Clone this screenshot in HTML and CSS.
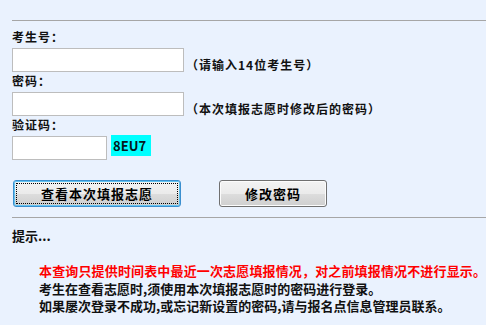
FILE: index.html
```html
<!DOCTYPE html>
<html lang="zh-CN">
<head>
<meta charset="utf-8">
<link rel="stylesheet" href="styles.css">
</head>
<body>
<div class="page">
  <div class="rule"></div>
  <form class="login">
    <div class="group">
      <div class="label">考生号：</div>
      <div class="field">
        <span class="input wide"></span>
        <span class="hint">（请输入14位考生号）</span>
      </div>
    </div>
    <div class="group">
      <div class="label">密码：</div>
      <div class="field">
        <span class="input wide"></span>
        <span class="hint">（本次填报志愿时修改后的密码）</span>
      </div>
    </div>
    <div class="group">
      <div class="label">验证码：</div>
      <div class="field top">
        <span class="input narrow"></span>
        <span class="captcha">8EU7</span>
      </div>
    </div>
    <div class="buttons">
      <div class="btn primary"><span class="focus">查看本次填报志愿</span></div>
      <div class="btn second"><span>修改密码</span></div>
    </div>
  </form>
  <div class="rule rule2"></div>
  <div class="tips-title">提示...</div>
  <div class="tips">
    <p class="red">本查询只提供时间表中最近一次志愿填报情况，对之前填报情况不进行显示。</p>
    <p>考生在查看志愿时,须使用本次填报志愿时的密码进行登录。</p>
    <p>如果屡次登录不成功,或忘记新设置的密码,请与报名点信息管理员联系。</p>
  </div>
</div>
</body>
</html>
```

FILE: styles.css
```css
html, body {
  margin: 0;
  padding: 0;
  background: #eaf2fe;
}
body {
  font-family: "Noto Sans CJK SC", "DejaVu Sans", sans-serif;
  color: #111;
  font-weight: bold;
  font-size: 12px;
}
.page {
  padding: 20px 0 0 12px;
}
.rule {
  height: 0;
  border-top: 1px solid #a6a6a6;
}
.login {
  margin: 7px 0 0 0;
}
.group {
  display: flex;
  flex-direction: column;
}
.label {
  height: 20px;
  line-height: 18px;
  letter-spacing: 1px;
}
.field {
  display: flex;
  align-items: flex-end;
  height: 24px;
}
.field.top {
  align-items: flex-start;
}
.input {
  display: block;
  box-sizing: border-box;
  height: 24px;
  background: #fff;
  border: 1px solid #bdbdbd;
}
.input.wide { width: 172px; }
.input.narrow { width: 95px; }
.hint {
  margin-left: 2px;
  line-height: 14px;
  letter-spacing: 1px;
}
.captcha {
  margin: -1px 0 0 4px;
  width: 40px;
  height: 21px;
  background: #00ffff;
  color: #061820;
  font-size: 13px;
  line-height: 21px;
  padding-left: 2px;
  box-sizing: border-box;
}
.buttons {
  display: flex;
  gap: 38px;
  margin: 20px 0 0 1px;
}
.btn {
  box-sizing: border-box;
  height: 27px;
  border-radius: 3px;
  display: flex;
  align-items: center;
  justify-content: center;
  font-size: 13px;
  letter-spacing: 1px;
  color: #000;
  background: linear-gradient(#f3f3f3 0%, #ebebeb 50%, #dddddd 51%, #cfcfcf 100%);
}
.btn.primary {
  width: 168px;
  border: 1px solid #3b8fcf;
  box-shadow: inset 0 0 0 1px #63c3f0;
  padding: 2px;
}
.btn.primary .focus {
  flex: 1;
  align-self: stretch;
  display: flex;
  align-items: center;
  justify-content: center;
  border: 1px dotted #000;
}
.btn.second {
  width: 108px;
  border: 1px solid #707070;
  box-shadow: inset 0 0 0 1px #fcfcfc;
}
.rule2 {
  margin-top: 10px;
}
.tips-title {
  margin-top: 10px;
  font-size: 13px;
  line-height: 16px;
}
.tips {
  margin: 18px 0 0 27px;
  font-size: 13px;
}
.tips p {
  margin: 0;
  line-height: 17.5px;
  white-space: nowrap;
}
.tips p.red {
  color: #ff0000;
  letter-spacing: 0.15px;
}
```
